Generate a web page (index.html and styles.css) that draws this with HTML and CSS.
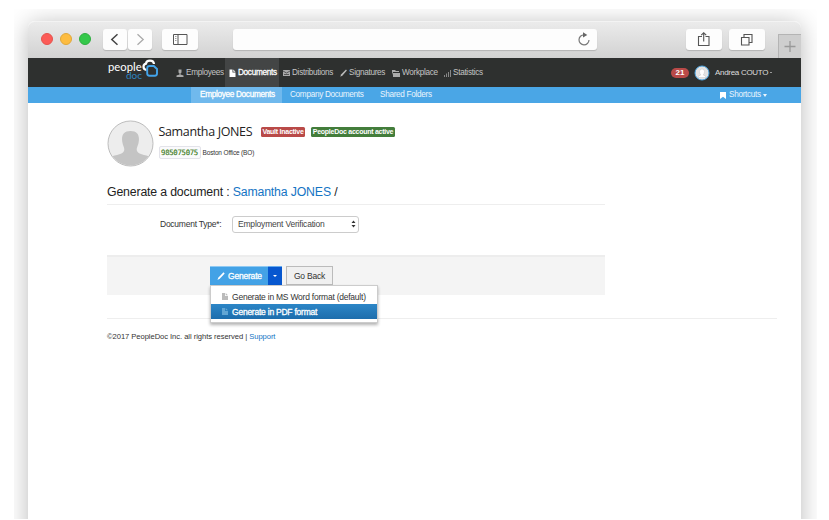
FILE: index.html
```
<!DOCTYPE html>
<html lang="en">
<head>
<meta charset="utf-8">
<title>Generate a document</title>
<link rel="stylesheet" href="styles.css">
</head>
<body>
<div class="stage">
<div class="window">
  <header class="chrome">
    <i class="dot red"></i><i class="dot amber"></i><i class="dot green"></i>
    <span class="tool back"><svg width="24" height="21" viewBox="0 0 24 21"><path d="M14.500 5.200 8.800 10.500l5.700 5.300" stroke="#444" stroke-width="1.500"/></svg></span>
    <span class="tool forward"><svg width="24" height="21" viewBox="0 0 24 21"><path d="m9.500 5.200 5.700 5.300-5.700 5.300" stroke="#aaa" stroke-width="1.300"/></svg></span>
    <span class="tool side"><svg width="36" height="21" viewBox="0 0 36 21"><path d="M11.500 5.500h13.500v10h-13.500zM16 5.500v10" stroke="#555"/><path d="M13 7.500h1.500M13 9.500h1.500M13 11.500h1.500" stroke="#888" stroke-width=".8"/></svg></span>
    <span class="tool address"><svg width="16" height="16" viewBox="0 0 16 16"><path d="M8 2.800A5 5 0 1 0 13 8" stroke="#777" stroke-width="1.200"/><path d="M7 .3 11.300 3 7 5.500z" fill="#666"/></svg></span>
    <span class="tool share"><svg width="36" height="21" viewBox="0 0 36 21"><path d="M16 7.500h-3.500v9h10.500v-9H19.500M17.700 12.500V4M15.200 6.200l2.500-2.400 2.500 2.400" stroke="#555" stroke-width="1.100"/></svg></span>
    <span class="tool tabs"><svg width="36" height="21" viewBox="0 0 36 21"><path d="M12.500 8.500h7.500v7.500h-7.500zM15 8.500V5.500h8v8h-3" stroke="#555" stroke-width="1.100"/></svg></span>
    <span class="newtab"><svg width="22" height="23" viewBox="0 0 22 23"><path d="M11 6v11M5.500 11.500h11" stroke="#999" stroke-width="1.300"/></svg></span>
  </header>
  <nav class="main">
    <div class="logo">
      <div class="wordmark"><b>people</b><span>doc</span></div>
      <svg width="17" height="20" viewBox="0 0 17 20"><path d="M4.500 10.800C2 10.800 1.500 9 1.500 7.800 1.500 6 2.500 5 4 4.700 4.300.8 11.500.3 12 5" stroke="#fff" stroke-width="2.200"/><path d="M7.500 7h4.300l3.200 3v4.600q0 2.200-2.200 2.200H7.500q-2.300 0-2.300-2.200V9.300Q5.200 7 7.500 7z" stroke="#43a4ea" stroke-width="1.900"/></svg>
    </div>
    <a class="item employees"><svg width="8" height="8" viewBox="0 0 8 8"><path d="M2.500.5h3v3l-1 1v1l3 1V8h-7V6.500l3-1v-1l-1-1z" fill="#aaa"/></svg><span>Employees</span></a>
    <a class="item documents"><svg width="7" height="8" viewBox="0 0 7 8"><path d="M.5.500h3v3h3V8h-6zM4.300.500 6.500 2.700H4.300z" fill="#fff"/></svg><span>Documents</span></a>
    <a class="item distributions"><svg width="7" height="8" viewBox="0 0 7 8"><path d="M0 1h7v6H0z" fill="#aaa"/><path d="m0 2 3.500 2L7 2M1 5.500h5" stroke="#333" stroke-width=".7"/></svg><span>Distributions</span></a>
    <a class="item signatures"><svg width="7" height="8" viewBox="0 0 7 8"><path d="m.3 7.700.7-2.200L6 .5l.9.900-4.400 5z" fill="#bbb"/></svg><span>Signatures</span></a>
    <a class="item workplace"><svg width="8" height="8" viewBox="0 0 8 8"><path d="M0 1h3l1 1h3v1H1v3L0 3zM1 4h7v4H1z" fill="#aaa"/></svg><span>Workplace</span></a>
    <a class="item statistics"><svg width="7" height="8" viewBox="0 0 7 8"><path d="M0 6h1v2H0zM2 4.500h1V8H2zM4 3h1v5H4zM6 1h1v7H6z" fill="#888"/></svg><span>Statistics</span></a>
    <span class="count">21</span>
    <svg class="face" width="16" height="16" viewBox="0 0 16 16"><circle cx="8" cy="8" r="7" fill="#e3e3e3" stroke="#4ba5e2"/><path d="M4 12.500q0-2 2.800-2.600Q5.500 8.500 5.500 6.500 5.500 4 8 4t2.500 2.500q0 2-1.300 3.400Q12 10.500 12 12.500z" fill="#fff" stroke="#bbb" stroke-width=".4"/></svg>
    <span class="user">Andrea COUTO</span><i class="usercaret"></i>
  </nav>
  <nav class="sub">
    <a class="tab current"><span>Employee Documents</span></a>
    <a class="tab company"><span>Company Documents</span></a>
    <a class="tab shared"><span>Shared Folders</span></a>
    <a class="shortcuts"><svg width="6" height="7" viewBox="0 0 6 7"><path d="M0 0h6v7L3 4.800 0 7z" fill="#fff"/></svg><span>Shortcuts</span><i></i></a>
  </nav>
  <main>
    <section class="profile">
      <svg width="47" height="48" viewBox="0 0 47 48"><defs><clipPath id="round"><circle cx="23.500" cy="23.500" r="22"/></clipPath></defs><circle cx="23.500" cy="23.500" r="22.500" fill="#ededed" stroke="#bdbdbd"/><path clip-path="url(#round)" d="M0 48v-8c4-6 15-4 17-9 1-3-1-5-1.500-8-1.500-7 .5-12 8-12s9.500 5 8 12c-.5 3-2.500 5-1.500 8 2 5 13 3 17 9v8z" fill="#c4c4c4"/></svg>
      <div class="details">
        <div class="line"><h1>Samantha JONES</h1><span class="badge inactive"><span>Vault Inactive</span></span><span class="badge active"><span>PeopleDoc account active</span></span></div>
        <div class="line second"><code>985075075</code><span class="office">Boston Office (BO)</span></div>
      </div>
    </section>
    <h2><span>Generate a document : <a>Samantha JONES</a> /</span></h2>
    <div class="field"><label>Document Type*:</label><div class="select"><span>Employment Verification</span><svg width="5" height="8" viewBox="0 0 5 8"><path d="M.5 3 2.500.5 4.500 3zM.5 5 2.500 7.500 4.500 5z" fill="#333"/></svg></div></div>
    <div class="actions">
      <button class="generate"><svg width="8" height="8" viewBox="0 0 8 8"><path d="m.5 8 .7-2.300L6.500.3l1.200 1.200L3 6.500z" fill="#fff"/></svg><span>Generate</span></button>
      <button class="toggle"><i></i></button>
      <button class="goback"><span>Go Back</span></button>
      <div class="menu">
        <a><svg width="6" height="7" viewBox="0 0 6 7"><path d="M0 0h3v3h3v4H0zM3.700 0 6 2.300H3.700z" fill="#bbb"/></svg><span class="word">Generate in MS Word format (default)</span></a>
        <a class="chosen"><svg width="6" height="7" viewBox="0 0 6 7"><path d="M0 0h3v3h3v4H0zM3.700 0 6 2.300H3.700z" fill="#62a6d4"/></svg><span class="pdf">Generate in PDF format</span></a>
      </div>
    </div>
    <footer><span>©2017 PeopleDoc Inc. all rights reserved | <a>Support</a></span></footer>
  </main>
</div>
</div>
</body>
</html>
```
FILE: styles.css
```
* { box-sizing: border-box; }
body { margin: 0; background: #fff; font-family: "Liberation Sans", Arial, sans-serif; font-size: 8.200px; letter-spacing: -.300px; color: #333; }
svg { display: block; flex: none; fill: none; }
a { text-decoration: none; }
span, label, h1, h2 { white-space: nowrap; }
.stage { width: 803px; height: 510px; margin: 9px 0 0 14px; overflow: hidden; padding: 12px 16px 0 14px; }
.window { width: 773px; height: 550px; background: #fff; border-radius: 7px; box-shadow: 0 3px 24px rgba(0,0,0,.28); }

.chrome { display: flex; height: 37px; padding: 7px 0 0 12.500px; background: linear-gradient(#ebebeb, #d2d2d2); border-radius: 7px 7px 0 0; border-top: 1px solid #f3f3f3; }
.dot { width: 12px; height: 12px; border-radius: 50%; margin: 3.700px 7px 0 0; border: 1px solid; flex: none; }
.dot.red { background: #fc5b57; border-color: #e5534d; }
.dot.amber { background: #fdbc40; border-color: #e0a83a; }
.dot.green { background: #34c84a; border-color: #2fae40; margin-right: 12.500px; }
.tool { height: 21px; flex: none; background: #fdfdfd; border-radius: 3px; box-shadow: 0 1px 1px rgba(0,0,0,.17); }
.back { width: 24px; }
.forward { width: 24px; margin-left: 1px; }
.side { width: 36px; margin-left: 10px; }
.address { width: 364px; margin-left: 34.500px; display: flex; justify-content: flex-end; padding: 3px 5px 0 0; }
.share { width: 36px; margin-left: 89.500px; }
.tabs { width: 36px; margin-left: 7px; }
.newtab { width: 23px; height: 24px; margin: 5px 0 0 auto; border: solid #b4b4b4; border-width: 1px 0 0 1px; background: #cecece; }

.main { height: 29px; background: #2e302f; display: flex; align-items: center; color: #c4c4c4; }
.logo { width: 51px; height: 29px; margin-left: 80px; display: flex; }
.wordmark { width: 34px; padding-top: 4px; font: 11.300px/11px Lato, sans-serif; color: #fff; letter-spacing: 0; }
.wordmark b { display: block; font-weight: 400; height: 9px; line-height: 10px; }
.wordmark span { display: block; text-align: right; color: #2f86c2; font-size: 10px; line-height: 9px; }
.logo svg { margin-top: 1px; }
.item { display: flex; align-items: center; height: 29px; }
.item svg { margin-right: 2px; }
.employees { width: 49px; margin-left: 17px; }
.documents { width: 54px; padding-left: 4px; background: #434545; color: #fff; }
.documents span, .current span, .generate span, .pdf { -webkit-text-stroke: .3px #fff; }
.distributions { width: 57px; margin-left: 4px; }
.signatures { width: 52px; }
.workplace { width: 52px; }
.statistics { width: 60px; }
.count { margin-left: 167px; width: 18px; height: 10px; line-height: 10px; border-radius: 5px; background: #b94a48; color: #fff; font-weight: 700; text-align: center; font-size: 8px; letter-spacing: 0; }
.face { margin-left: 5px; }
.user { margin-left: 5px; color: #ddd; font-size: 8px; letter-spacing: -.3px; }
.usercaret { margin-left: 2px; width: 2px; height: 1px; background: #999; }

.sub { height: 16px; background: #4aa6e6; display: flex; color: #eaf5fd; line-height: 16px; }
.tab.current { width: 91px; margin-left: 163px; padding-left: 9px; background: #70b9ed; color: #fff; }
.company { margin-left: 8px; width: 90px; }
.shared { width: 80px; }
.shortcuts { display: flex; margin-left: auto; width: 81px; align-items: center; }
.shortcuts span { margin-left: 3px; }
.shortcuts i { margin-left: 2px; border: solid transparent; border-width: 3px 2px 0; border-top-color: #eaf5fd; }

main { padding: 17px 24px 0 79px; }
.profile { display: flex; height: 48px; }
.details { margin-left: 4.500px; padding-top: 3px; }
.line { display: flex; align-items: center; height: 18px; }
h1 { margin: 0; width: 94px; font: 12.500px/18px "Open Sans", sans-serif; letter-spacing: -.350px; color: #222; }
.badge { height: 10px; line-height: 10px; border-radius: 1.500px; color: #fff; font-weight: 700; font-size: 7px; letter-spacing: -.260px; text-align: center; }
.inactive { width: 44px; margin-left: 8.500px; background: #b94a48; }
.active { width: 84px; margin-left: 6px; background: #437d3b; }
.second { height: 13px; margin-top: 5px; }
code { width: 42px; height: 13px; border: 1px solid #e3e3ea; border-radius: 2px; background: #fafafc; text-align: center; font: 7.300px/12px "DejaVu Sans Mono", monospace; letter-spacing: -.300px; color: #3b7a22; -webkit-text-stroke: .15px #3b7a22; }
.office { margin-left: 2px; font-size: 6.500px; letter-spacing: -.150px; }
h2 { margin: 16px 0 0; width: 498px; height: 21px; border-bottom: 1px solid #eee; font: 12.300px/16px "Liberation Sans", sans-serif; letter-spacing: -.160px; color: #222; }
h2 a, footer a { color: #1474c4; }
.field { display: flex; align-items: center; height: 16px; margin-top: 11px; padding-left: 53px; }
label { width: 72px; font-size: 8.500px; letter-spacing: -.250px; }
.select { width: 127px; height: 17px; border: 1px solid #ccc; border-radius: 3px; display: flex; align-items: center; justify-content: space-between; padding: 0 2px 0 5px; font-size: 8.500px; letter-spacing: -.200px; color: #444; }
.actions { position: relative; display: flex; width: 498px; height: 40px; margin-top: 23px; padding: 9px 0 0 103px; background: #f4f4f4; border-top: 2px solid #ededed; }
button { display: flex; align-items: center; height: 19px; border: 0; padding: 0; font: 8.500px "Liberation Sans", sans-serif; letter-spacing: -.200px; }
.generate { width: 58px; background: #43a2e6; border-top: 1px solid #8fc9f3; color: #fff; padding-left: 7px; }
.generate span { margin-left: 3px; }
.toggle { width: 14px; background: #0757cf; border-top: 1px solid #68acee; justify-content: center; }
.toggle i { border: solid transparent; border-width: 2px 2px 0; border-top-color: #fff; }
.goback { width: 47px; margin-left: 4px; border: 1px solid #bbb; background: #f0f0f0; color: #333; justify-content: center; }
.menu { position: absolute; left: 103px; top: 28px; width: 168px; height: 38px; padding: 3px 0; background: #fff; border: 1px solid #ccc; box-shadow: 0 2px 3px rgba(0,0,0,.3); font-size: 8.500px; letter-spacing: -.230px; }
.menu a { display: flex; align-items: center; height: 15px; padding-left: 11px; }
.menu svg { margin-right: 4px; }
.menu .chosen { background: linear-gradient(#2c86c7, #1d6dac); color: #fff; }
footer { border-top: 1px solid #eee; margin-top: 23px; padding-top: 13px; font-size: 7.600px; line-height: 10px; letter-spacing: -.050px; }
```
